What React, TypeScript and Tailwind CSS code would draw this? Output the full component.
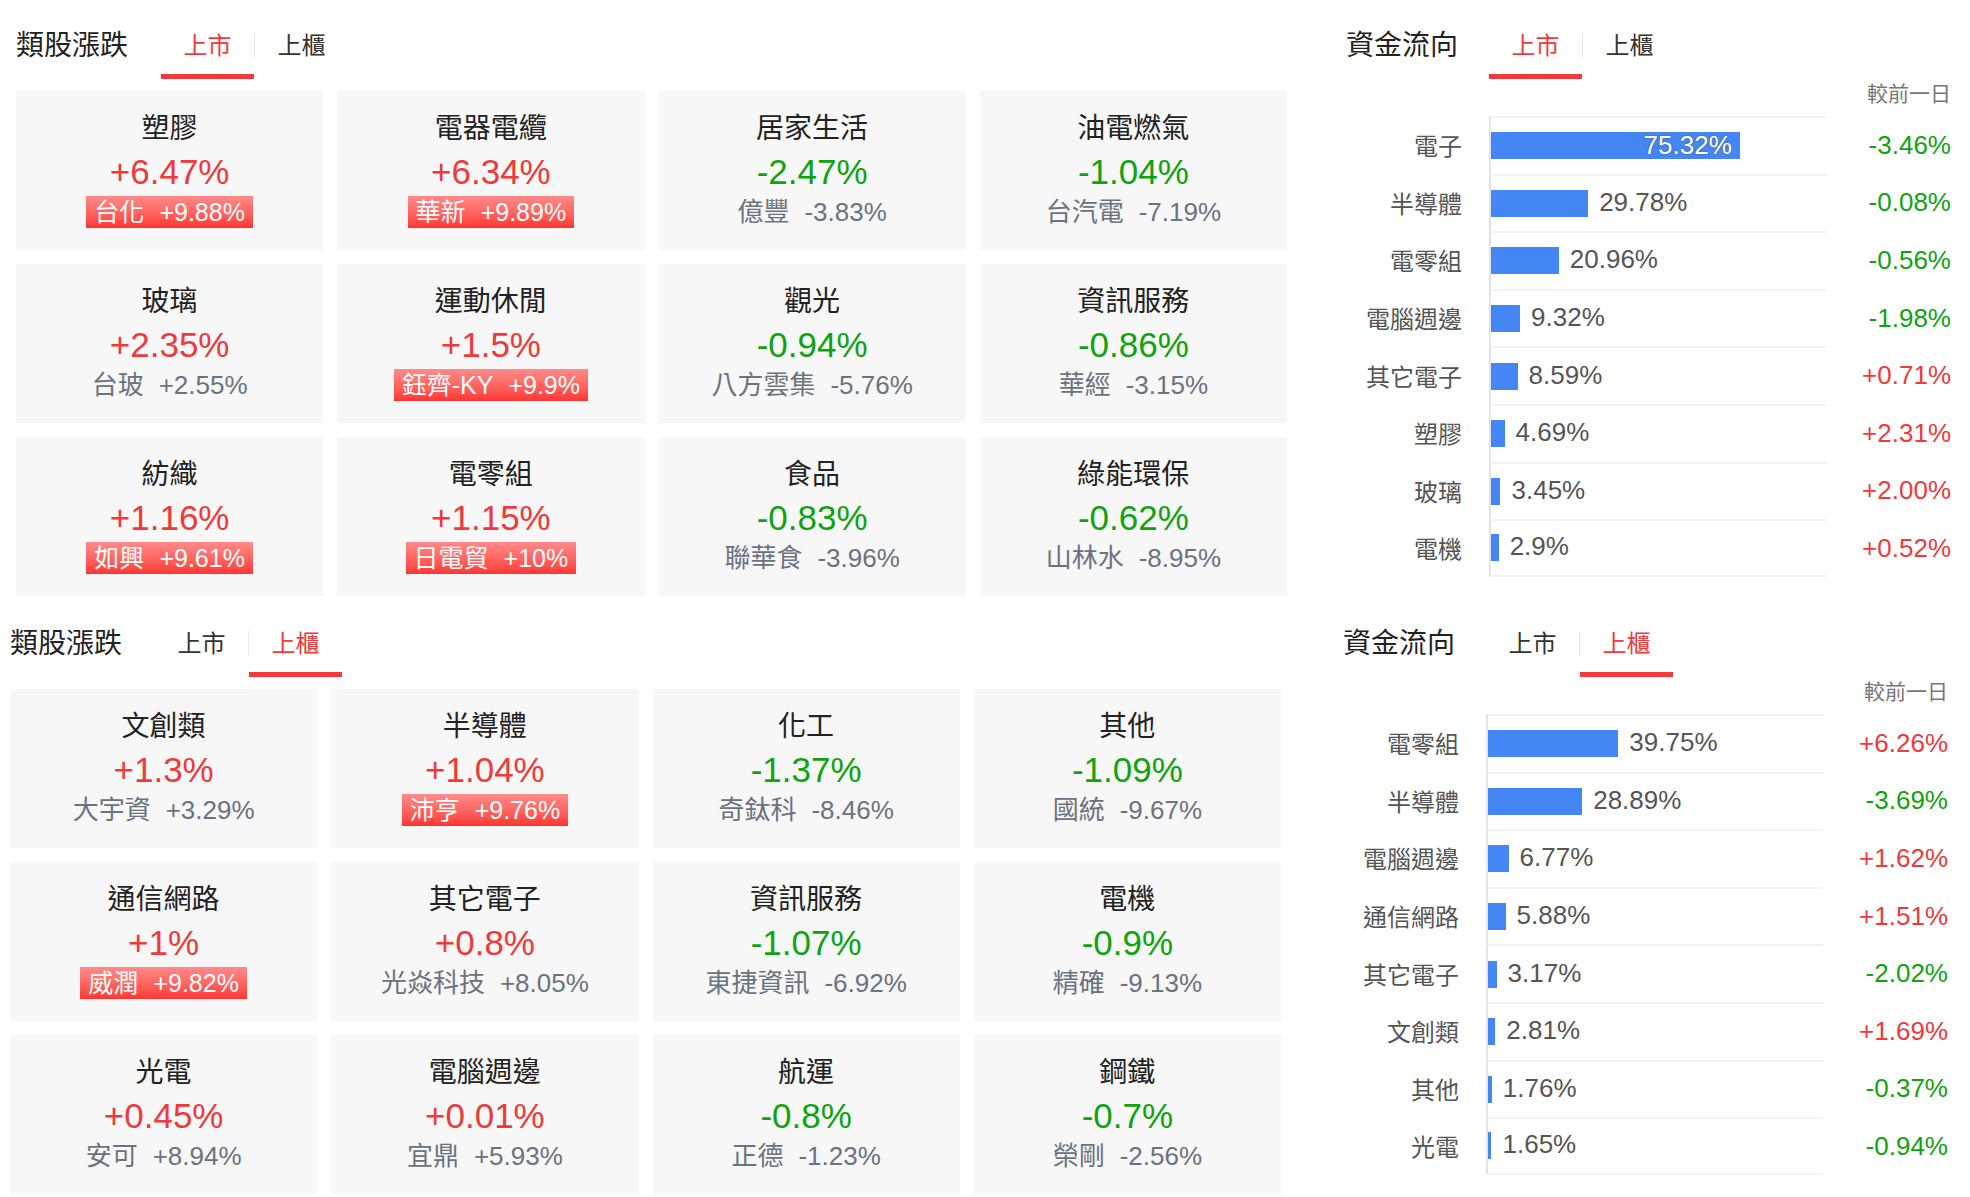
import React from "react";
import clsx from "clsx";

type Sector = { name: string; pct: string; lead: string; leadPct: string; limit?: boolean };
type Flow = { name: string; share: number; diff: string };

const twseSectors: Sector[] = [
  { name: "塑膠", pct: "+6.47%", lead: "台化", leadPct: "+9.88%", limit: true },
  { name: "電器電纜", pct: "+6.34%", lead: "華新", leadPct: "+9.89%", limit: true },
  { name: "居家生活", pct: "-2.47%", lead: "億豐", leadPct: "-3.83%" },
  { name: "油電燃氣", pct: "-1.04%", lead: "台汽電", leadPct: "-7.19%" },
  { name: "玻璃", pct: "+2.35%", lead: "台玻", leadPct: "+2.55%" },
  { name: "運動休閒", pct: "+1.5%", lead: "鈺齊-KY", leadPct: "+9.9%", limit: true },
  { name: "觀光", pct: "-0.94%", lead: "八方雲集", leadPct: "-5.76%" },
  { name: "資訊服務", pct: "-0.86%", lead: "華經", leadPct: "-3.15%" },
  { name: "紡織", pct: "+1.16%", lead: "如興", leadPct: "+9.61%", limit: true },
  { name: "電零組", pct: "+1.15%", lead: "日電貿", leadPct: "+10%", limit: true },
  { name: "食品", pct: "-0.83%", lead: "聯華食", leadPct: "-3.96%" },
  { name: "綠能環保", pct: "-0.62%", lead: "山林水", leadPct: "-8.95%" },
];

const otcSectors: Sector[] = [
  { name: "文創類", pct: "+1.3%", lead: "大宇資", leadPct: "+3.29%" },
  { name: "半導體", pct: "+1.04%", lead: "沛亨", leadPct: "+9.76%", limit: true },
  { name: "化工", pct: "-1.37%", lead: "奇鈦科", leadPct: "-8.46%" },
  { name: "其他", pct: "-1.09%", lead: "國統", leadPct: "-9.67%" },
  { name: "通信網路", pct: "+1%", lead: "威潤", leadPct: "+9.82%", limit: true },
  { name: "其它電子", pct: "+0.8%", lead: "光焱科技", leadPct: "+8.05%" },
  { name: "資訊服務", pct: "-1.07%", lead: "東捷資訊", leadPct: "-6.92%" },
  { name: "電機", pct: "-0.9%", lead: "精確", leadPct: "-9.13%" },
  { name: "光電", pct: "+0.45%", lead: "安可", leadPct: "+8.94%" },
  { name: "電腦週邊", pct: "+0.01%", lead: "宜鼎", leadPct: "+5.93%" },
  { name: "航運", pct: "-0.8%", lead: "正德", leadPct: "-1.23%" },
  { name: "鋼鐵", pct: "-0.7%", lead: "榮剛", leadPct: "-2.56%" },
];

const twseFlow: Flow[] = [
  { name: "電子", share: 75.32, diff: "-3.46%" },
  { name: "半導體", share: 29.78, diff: "-0.08%" },
  { name: "電零組", share: 20.96, diff: "-0.56%" },
  { name: "電腦週邊", share: 9.32, diff: "-1.98%" },
  { name: "其它電子", share: 8.59, diff: "+0.71%" },
  { name: "塑膠", share: 4.69, diff: "+2.31%" },
  { name: "玻璃", share: 3.45, diff: "+2.00%" },
  { name: "電機", share: 2.9, diff: "+0.52%" },
];

const otcFlow: Flow[] = [
  { name: "電零組", share: 39.75, diff: "+6.26%" },
  { name: "半導體", share: 28.89, diff: "-3.69%" },
  { name: "電腦週邊", share: 6.77, diff: "+1.62%" },
  { name: "通信網路", share: 5.88, diff: "+1.51%" },
  { name: "其它電子", share: 3.17, diff: "-2.02%" },
  { name: "文創類", share: 2.81, diff: "+1.69%" },
  { name: "其他", share: 1.76, diff: "-0.37%" },
  { name: "光電", share: 1.65, diff: "-0.94%" },
];

const tone = (v: string) => (v.startsWith("+") ? "text-[#ee3a3a]" : "text-[#10a310]");

function PanelHeader({ title, active, gap }: { title: string; active: 0 | 1; gap: string }) {
  return (
    <div className="flex h-[79px] items-stretch">
      <div className="flex items-center pb-[5px] pt-[18px] text-[28px] leading-[36px] text-[#222]">{title}</div>
      <div className={clsx("flex", gap)}>
        {["上市", "上櫃"].map((label, i) => (
          <React.Fragment key={label}>
            {i === 1 && <div className="mt-[33px] h-[25px] w-px bg-[#e8e8e8]" />}
            <div
              className={clsx(
                "flex w-[93px] items-center justify-center border-b-[5px] pt-[18px] text-[24px] leading-[32px]",
                active === i ? "border-[#ef3b3b] text-[#ef3b3b]" : "border-transparent text-[#333]"
              )}
            >
              {label}
            </div>
          </React.Fragment>
        ))}
      </div>
    </div>
  );
}

function SectorCard({ s }: { s: Sector }) {
  return (
    <div className="flex h-[159px] flex-col items-center bg-[#f7f7f7] pt-[20px]">
      <div className="h-[36px] text-[28px] leading-[36px] text-[#222]">{s.name}</div>
      <div className={clsx("mt-[5px] h-[40px] text-[35px] leading-[40px]", tone(s.pct))}>{s.pct}</div>
      <div className="mt-[4px] flex h-[32px] items-center">
        {s.limit ? (
          <div className="flex h-[32px] items-center bg-linear-to-b from-[#ff8a8a] to-[#ff3333] px-[8px] text-[25px] leading-[32px] text-white">
            <span>{s.lead}</span>
            <span className="ml-[15px]">{s.leadPct}</span>
          </div>
        ) : (
          <div className="flex items-center text-[26px] leading-[32px] text-[#6b7280]">
            <span>{s.lead}</span>
            <span className="ml-[15px]">{s.leadPct}</span>
          </div>
        )}
      </div>
    </div>
  );
}

function SectorBoard({ title, active, sectors }: { title: string; active: 0 | 1; sectors: Sector[] }) {
  return (
    <div className="w-[1271px]">
      <PanelHeader title={title} active={active} gap="ml-[33px]" />
      <div className="mt-[12px] grid grid-cols-4 gap-[14px]">
        {sectors.map((s) => (
          <SectorCard key={s.name} s={s} />
        ))}
      </div>
    </div>
  );
}

function FlowPanel({ active, rows }: { active: 0 | 1; rows: Flow[] }) {
  return (
    <div className="w-[605px]">
      <PanelHeader title="資金流向" active={active} gap="ml-[31px]" />
      <div className="mt-[3px] h-[24px] text-right text-[21px] leading-[24px] text-[#777]">較前一日</div>
      <div className="mt-[10px]">
        {rows.map((r, i) => {
          const w = Math.max(2, r.share * 3.33 - 2);
          const inside = r.share > 50;
          return (
            <div key={r.name} className="flex h-[57.6px] items-stretch">
              <div className="flex w-[116px] items-center justify-end pt-[5px] text-[24px] leading-[30px] text-[#555]">
                {r.name}
              </div>
              <div
                className={clsx(
                  "ml-[27px] flex w-[337px] items-center border-l-2 border-t-2 border-l-[#e3e3e3] border-t-[#f2f2f2]",
                  i === rows.length - 1 && "border-b-2 border-b-[#f2f2f2]"
                )}
              >
                {inside ? (
                  <div
                    className="flex h-[27px] items-center justify-end bg-[#4487f4] pr-[8px] text-[26px] leading-[27px] text-white [text-shadow:0_0_2px_#555]"
                    style={{ width: w }}
                  >
                    {r.share}%
                  </div>
                ) : (
                  <>
                    <div className="h-[27px] bg-[#4487f4]" style={{ width: w }} />
                    <span className="ml-[11px] pb-[2px] text-[26px] leading-[27px] text-[#555]">{r.share}%</span>
                  </>
                )}
              </div>
              <div className={clsx("flex flex-1 items-center justify-end text-[26px] leading-[30px]", tone(r.diff))}>
                {r.diff}
              </div>
            </div>
          );
        })}
      </div>
    </div>
  );
}

export default function App() {
  return (
    <div className="flex min-h-[1197px] w-[1970px] flex-col bg-white font-['Liberation_Sans','Noto_Sans_CJK_TC',sans-serif]">
      <section className="flex pl-[16px]">
        <SectorBoard title="類股漲跌" active={0} sectors={twseSectors} />
        <div className="ml-[59px]">
          <FlowPanel active={0} rows={twseFlow} />
        </div>
      </section>
      <section className="mt-[2px] flex pl-[10px]">
        <SectorBoard title="類股漲跌" active={1} sectors={otcSectors} />
        <div className="ml-[62px]">
          <FlowPanel active={1} rows={otcFlow} />
        </div>
      </section>
    </div>
  );
}
